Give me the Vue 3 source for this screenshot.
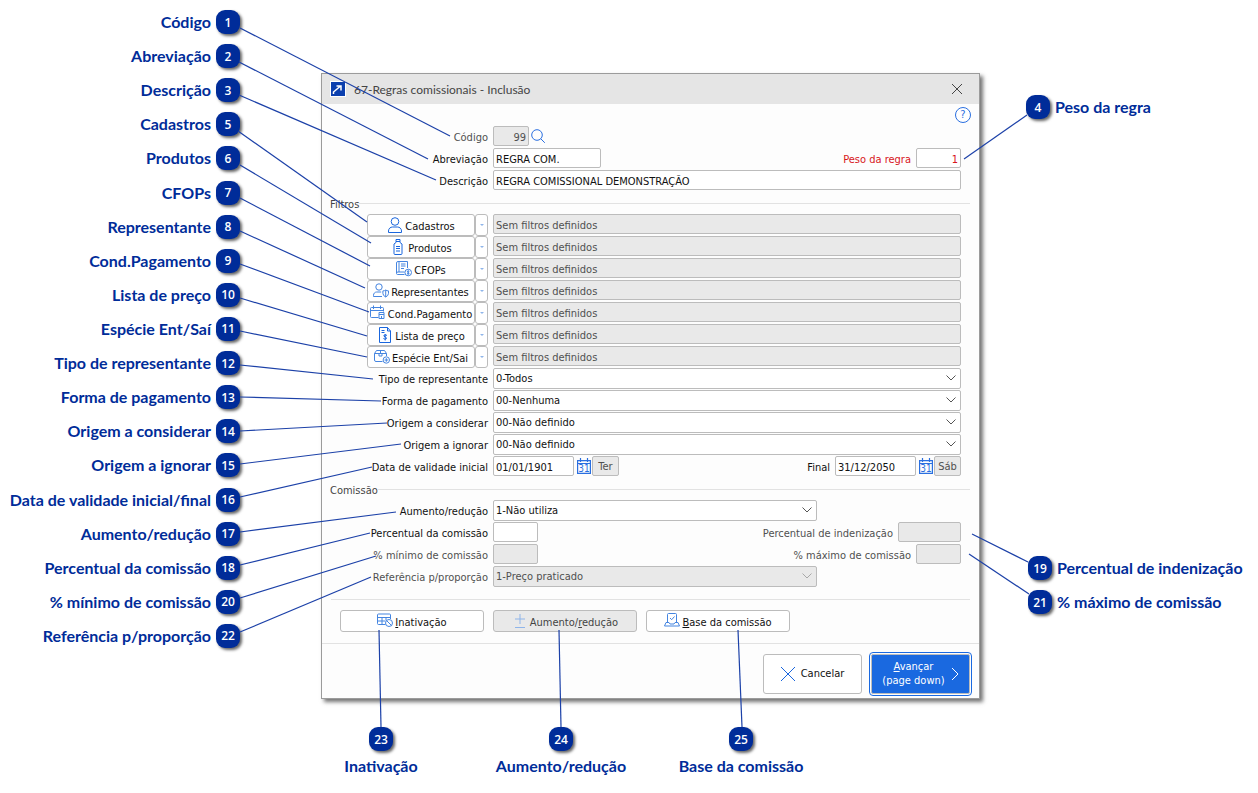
<script setup>
const leftCallouts = [
  { n: 1, text: 'Código', line: [240, 28, 450, 136] },
  { n: 2, text: 'Abreviação', line: [239, 62, 428, 159] },
  { n: 3, text: 'Descrição', line: [239, 95, 436, 180] },
  { n: 5, text: 'Cadastros', line: [238, 131, 367, 222] },
  { n: 6, text: 'Produtos', line: [240, 165, 371, 243] },
  { n: 7, text: 'CFOPs', line: [240, 198, 370, 266] },
  { n: 8, text: 'Representante', line: [240, 231, 365, 288] },
  { n: 9, text: 'Cond.Pagamento', line: [240, 264, 369, 312] },
  { n: 10, text: 'Lista de preço', line: [240, 298, 367, 336] },
  { n: 11, text: 'Espécie Ent/Saí', line: [240, 331, 367, 357] },
  { n: 12, text: 'Tipo de representante', line: [240, 365, 373, 379] },
  { n: 13, text: 'Forma de pagamento', line: [240, 397, 381, 401] },
  { n: 14, text: 'Origem a considerar', line: [240, 431, 387, 423] },
  { n: 15, text: 'Origem a ignorar', line: [240, 464, 401, 444] },
  { n: 16, text: 'Data de validade inicial/final', line: [240, 497, 372, 467] },
  { n: 17, text: 'Aumento/redução', line: [240, 532, 396, 512] },
  { n: 18, text: 'Percentual da comissão', line: [240, 565, 370, 533] },
  { n: 20, text: '% mínimo de comissão', line: [240, 598, 376, 556] },
  { n: 22, text: 'Referência p/proporção', line: [240, 632, 371, 577] },
]
const bottomCallouts = [
  { n: 23, text: 'Inativação', line: [381, 727, 379, 630] },
  { n: 24, text: 'Aumento/redução', line: [561, 727, 559, 630] },
  { n: 25, text: 'Base da comissão', line: [742, 727, 738, 630] },
]
const rightLines = [
  [47, 115, -16, 159],
  [48, 562, -8, 534],
  [49, 594, -11, 554],
]
const filters = [
  { id: 'cadastros', text: 'Cadastros', icon: 'user' },
  { id: 'produtos', text: 'Produtos', icon: 'bottle' },
  { id: 'cfops', text: 'CFOPs', icon: 'book' },
  { id: 'representantes', text: 'Representantes', icon: 'rep' },
  { id: 'condpag', text: 'Cond.Pagamento', icon: 'calendar' },
  { id: 'lista', text: 'Lista de preço', icon: 'doc' },
  { id: 'especie', text: 'Espécie Ent/Sai', icon: 'box' },
]
const selects = [
  { id: 'tipo', label: 'Tipo de representante', value: '0-Todos' },
  { id: 'forma', label: 'Forma de pagamento', value: '00-Nenhuma' },
  { id: 'considerar', label: 'Origem a considerar', value: '00-Não definido' },
  { id: 'ignorar', label: 'Origem a ignorar', value: '00-Não definido' },
]
</script>

<template>
  <main class="page">
    <ul class="callouts left">
      <li v-for="c in leftCallouts" :key="c.n" class="callout">
        <span>{{ c.text }}</span><b class="badge">{{ c.n }}</b>
      </li>
    </ul>

    <form class="dialog" @submit.prevent>
      <header class="titlebar">
        <svg class="logo" viewBox="0 0 16 16"><rect width="16" height="16" fill="#fff" stroke="none" /><rect x="1" y="1" width="14" height="14" fill="#0b3fae" stroke="none" /><path d="M3.500 13v-2L10 5.500M6.500 5H11v4.500" fill="none" stroke="#fff" stroke-width="1.500" /></svg>
        <h1>67-Regras comissionais - Inclusão</h1>
        <button type="button" class="close" aria-label="Fechar"><svg viewBox="0 0 12 12"><path d="M1 1l10 10M11 1L1 11" /></svg></button>
      </header>

      <div class="body">
        <button type="button" class="help" aria-label="Ajuda">?</button>

        <div class="row">
          <label class="lbl muted" for="codigo">Código</label>
          <input id="codigo" class="w36 num" value="99" disabled />
          <button type="button" class="glyph" aria-label="Pesquisar"><svg viewBox="0 0 14 14"><circle cx="6" cy="6" r="5.300" /><path d="M9.800 9.800l4 4" /></svg></button>
        </div>
        <div class="row">
          <label class="lbl" for="abrev">Abreviação</label>
          <input id="abrev" class="w108" value="REGRA COM." />
          <span class="push"></span>
          <label class="red" for="peso">Peso da regra</label>
          <input id="peso" class="w45 num red" value="1" />
        </div>
        <div class="row">
          <label class="lbl" for="descr">Descrição</label>
          <input id="descr" class="grow" value="REGRA COMISSIONAL DEMONSTRAÇÃO" />
        </div>

        <h2 class="legend"><span>Filtros</span></h2>

        <div v-for="f in filters" :key="f.id" class="row">
          <div class="split">
            <button type="button" class="filter">
              <svg v-if="f.icon === 'user'" viewBox="0 0 16 16"><circle cx="8" cy="4.500" r="3.800" /><path d="M1.500 15.500v-1.500c0-2.500 2-4 4-4h5c2 0 4 1.500 4 4v1.500z" /></svg>
              <svg v-else-if="f.icon === 'bottle'" viewBox="0 0 16 16"><path d="M6 .5h4v2H6zM6 2.500v1L4 5v9.500q0 1 1 1h6q1 0 1-1V5l-2-1.500v-1M6 7.500h4M6 9.500h4M6 12h4" /></svg>
              <svg v-else-if="f.icon === 'book'" class="soft" viewBox="0 0 16 16"><path d="M8.500 13.500h-7q-1 0-1-1.200V2q0-1.500 1.500-1.500h9.500V7M3 .5v10.500M.5 12q0-1 1.500-1h6.500M5 3h4.500M5 5h4.500M5 7.500h3" /><circle cx="12.200" cy="11.500" r="3.300" /><path d="M13.300 10.500q-1-.8-1.800-.2-.6.800.7 1.200 1.400.4.800 1.200-.8.700-2-.2M12.200 9.300v4.400" /></svg>
              <svg v-else-if="f.icon === 'rep'" class="soft" viewBox="0 0 16 16"><circle cx="6" cy="4" r="3.200" /><path d="M9 13.500H.5v-1.200c0-2 1.500-3.300 3.200-3.300h4.500M12.700 7q1.200.9 2.800.9v2.400q0 2.400-2.800 3.700-2.800-1.300-2.800-3.700V7.900q1.600 0 2.800-.9zM12.700 7v7" /></svg>
              <svg v-else-if="f.icon === 'calendar'" class="soft" viewBox="0 0 16 16"><path d="M8.500 12.500h-7q-1 0-1-1V3.500q0-1 1-1h11q1 0 1 1v3M.5 5.500h13M3.500.5v3.500M10.500.5v3.500" /><path d="M9 7.500h5v6H9zM9 9.500h5M11.500 11v2" /></svg>
              <svg v-else-if="f.icon === 'doc'" viewBox="0 0 16 16"><path d="M2.500.5h8l3 3.500v11.500h-11zM10.500.5V4h3M4.500 3.500h3M4.500 5.500h3M10 8.500q-1.500-1.200-2.800-.5-1 1.300 1 2 2 .7 1 1.900-1.300.8-2.800-.4M8.200 7v6.500" /></svg>
              <svg v-else class="soft" viewBox="0 0 16 16"><path d="M8.500 12.500H2q-1.500 0-1.500-1.500V4.500L2.500 1.500h8l2 3V7M.5 4.500h12M6.500 1.500v3M5 4.500v2.500h3V4.500" /><circle cx="12.300" cy="11" r="3.200" /><path d="M12.300 9.200v3.600M10.500 11h3.600" /></svg>
              <span>{{ f.text }}</span>
            </button>
            <button type="button" class="drop" :aria-label="'Opções de ' + f.text"><svg viewBox="0 0 6 4"><path d="M1 1h4L3 3z" /></svg></button>
          </div>
          <input :id="f.id" class="grow" :aria-label="f.text" value="Sem filtros definidos" disabled />
        </div>

        <div v-for="s in selects" :key="s.id" class="row">
          <label class="lbl" :for="s.id">{{ s.label }}</label>
          <div class="select grow">
            <select :id="s.id"><option>{{ s.value }}</option></select>
            <svg viewBox="0 0 10 6"><path d="M.5.5 5 5 9.500.5" /></svg>
          </div>
        </div>

        <div class="row">
          <label class="lbl" for="dini">Data de validade inicial</label>
          <input id="dini" class="w81" value="01/01/1901" />
          <button type="button" class="glyph cal" aria-label="Escolher data inicial"><svg viewBox="0 0 14 16"><path d="M.6 2.600h12.800v12.800H.6zM.6 5.500h12.800M3.500 0v4M10.500 0v4" /><text x="7" y="14">31</text></svg></button>
          <output class="day">Ter</output>
          <span class="push"></span>
          <label for="dfim">Final</label>
          <input id="dfim" class="w81" value="31/12/2050" />
          <button type="button" class="glyph cal" aria-label="Escolher data final"><svg viewBox="0 0 14 16"><path d="M.6 2.600h12.800v12.800H.6zM.6 5.500h12.800M3.500 0v4M10.500 0v4" /><text x="7" y="14">31</text></svg></button>
          <output class="day">Sáb</output>
        </div>

        <h2 class="legend"><span>Comissão</span></h2>

        <div class="row">
          <label class="lbl" for="aumento">Aumento/redução</label>
          <div class="select w324">
            <select id="aumento"><option>1-Não utiliza</option></select>
            <svg viewBox="0 0 10 6"><path d="M.5.5 5 5 9.500.5" /></svg>
          </div>
        </div>
        <div class="row">
          <label class="lbl" for="perc">Percentual da comissão</label>
          <input id="perc" class="w45" />
          <span class="push"></span>
          <label class="muted" for="inden">Percentual de indenização</label>
          <input id="inden" class="w63" disabled />
        </div>
        <div class="row">
          <label class="lbl muted" for="min">% mínimo de comissão</label>
          <input id="min" class="w45" disabled />
          <span class="push"></span>
          <label class="muted" for="max">% máximo de comissão</label>
          <input id="max" class="w45" disabled />
        </div>
        <div class="row">
          <label class="lbl muted" for="ref">Referência p/proporção</label>
          <div class="select w324">
            <select id="ref" disabled><option>1-Preço praticado</option></select>
            <svg viewBox="0 0 10 6"><path d="M.5.5 5 5 9.500.5" /></svg>
          </div>
        </div>

        <hr />

        <div class="actions">
          <button type="button"><svg class="soft" viewBox="0 0 16 16"><path d="M8.500 11.500h-7q-1 0-1-1V2q0-1 1-1h11q1 0 1 1v4M.5 4.500h13M.5 8h8M5 4.500v7M9 4.500V7" /><circle cx="12" cy="10" r="3.500" /><path d="M9.500 7.500l5 5" /></svg><span><u>I</u>nativação</span></button>
          <button type="button" disabled><svg class="faint" viewBox="0 0 16 16"><path d="M8 1v10M3 6h10M3 14.500h10" /></svg><span>Aumento/<u>r</u>edução</span></button>
          <button type="button"><svg class="soft" viewBox="0 0 16 16"><path d="M3.500 9.500v-8q0-1 1-1h7q1 0 1 1v8M2 9.500h3l1 1.500h4l1-1.500h3l1.500 3.500H.5zM6 5l1.700 1.700L10.500 3.500" /></svg><span><u>B</u>ase da comissão</span></button>
        </div>
      </div>

      <footer class="foot">
        <button type="button" class="cancel"><svg viewBox="0 0 14 14"><path d="M0 0l14 14M14 0L0 14" /></svg>Cancelar</button>
        <button type="submit" class="next"><span><u>A</u>vançar<br />(page down)</span><svg viewBox="0 0 8 14"><path d="M1 1l6 6-6 6" /></svg></button>
      </footer>
    </form>

    <div class="right">
      <div class="callout"><b class="badge">4</b><span>Peso da regra</span></div>
      <ul class="callouts pair">
        <li class="callout"><b class="badge">19</b><span>Percentual de indenização</span></li>
        <li class="callout"><b class="badge">21</b><span>% máximo de comissão</span></li>
      </ul>
      <svg class="wires"><line v-for="(l, i) in rightLines" :key="i" :x1="l[0]" :y1="l[1]" :x2="l[2]" :y2="l[3]" /></svg>
    </div>

    <ul class="callouts bottom">
      <li v-for="c in bottomCallouts" :key="c.n" class="callout"><b class="badge">{{ c.n }}</b><span>{{ c.text }}</span></li>
    </ul>

    <svg class="wires"><line v-for="c in [...leftCallouts, ...bottomCallouts]" :key="c.n" :x1="c.line[0]" :y1="c.line[1]" :x2="c.line[2]" :y2="c.line[3]" /></svg>
  </main>
</template>

<style>
body { background: #fff; }
</style>

<style scoped>
* { box-sizing: border-box; }
.page {
  position: relative;
  display: grid;
  grid-template-columns: 321px minmax(600px, 1fr) 278px;
  align-items: start;
  font: 11px/14px "DejaVu Sans Condensed", "DejaVu Sans", sans-serif;
  color: #111;
}
ul { list-style: none; margin: 0; padding: 0; }
.wires { position: absolute; left: 0; top: 0; width: 1px; height: 1px; overflow: visible; pointer-events: none; }
.wires line { stroke: #1c41a8; stroke-width: 1.2; }

.callouts { display: flex; }
.callout { display: flex; align-items: center; gap: 5px; height: 24px; color: #002c99; font: 700 16px/20px Lato, sans-serif; white-space: nowrap; }
.badge {
  display: grid; place-items: center; width: 24px; height: 24px; padding-top: 1px; border-radius: 9px;
  background: #002c99; color: #fff; font: 600 12px/16px "Open Sans", sans-serif;
  box-shadow: 2px 2px 3px rgba(0, 0, 0, .6);
}
.left { flex-direction: column; justify-content: space-between; align-items: flex-end; height: 638px; margin: 10px 81px 0 0; }
.right { position: relative; padding: 95px 0 0 46px; }
.pair { flex-direction: column; gap: 10px; margin: 437px 0 0 2px; }
.bottom { grid-column: 1 / -1; padding: 28px 0 0 291px; }
.bottom .callout { flex-direction: column; width: 180px; height: auto; }

.dialog { margin-top: 73px; border: 1px solid #9b9b9b; background: #fdfdfd; box-shadow: 3px 3px 4px rgba(0, 0, 0, .55); }
.titlebar { display: flex; align-items: center; height: 30px; padding: 0 16px 0 8px; background: #e5e5e5; }
.logo { width: 16px; height: 16px; }
h1 { flex: 1; margin: 2px 0 0 8px; font: 400 12px/16px Lato, sans-serif; color: #444; }
button { font: inherit; color: inherit; padding: 0; margin: 0; }
svg { fill: none; stroke: #1a66dd; stroke-width: 1; flex: none; }
svg.soft { stroke: #4585e0; }
svg.faint { stroke: #8fb5ea; }
.close, .glyph { display: grid; place-items: center; border: 0; background: none; }
.close svg { width: 12px; height: 12px; stroke: #444; }

.body { position: relative; padding: 22px 18px 11px 0; }
.help { position: absolute; top: 3px; right: 8px; width: 16px; height: 16px; border: 1px solid #2a6fe0; border-radius: 50%; background: #fff; color: #2a6fe0; line-height: 14px; }
.row { display: flex; height: 22px; gap: 5px; align-items: flex-start; }
label { line-height: 24px; white-space: nowrap; }
.lbl { width: 166px; text-align: right; }
.push { flex: 1; }
.grow { flex: 1; min-width: 0; }
.muted { color: #505050; }
.red, input.red { color: #d8161c; }
input, .day { height: 20px; padding: 2px 2px 0; border: 1px solid #bcbcbc; border-radius: 2px; background: #fff; font: inherit; color: #111; }
input:disabled, .day { background: #e9e9e9; color: #505050; }
.num { text-align: right; }
.w36 { width: 36px; }
.w45 { width: 45px; }
.w63 { width: 63px; }
.w81 { width: 81px; }
.w108 { width: 108px; }
.w324 { width: 324px; }
.glyph { height: 20px; margin-left: -3px; }
.glyph svg { width: 14px; height: 14px; stroke: #2a6fe0; }
.glyph.cal { margin: 0 -4px 0 -2px; }
.glyph.cal svg { height: 16px; stroke-width: 1.2; }
.cal text { fill: #2a6fe0; stroke: none; font: 10px "DejaVu Sans Condensed", sans-serif; text-anchor: middle; }
.day { width: 27px; padding: 0; text-align: center; line-height: 20px; }

.legend { display: flex; align-items: center; height: 22px; margin: 0 -9px 0 8px; font: inherit; color: #444; }
.legend span { padding-top: 3px; }
.legend::after { content: ""; flex: 1; height: 1px; background: #e2e2e2; }

.split { display: flex; width: 166px; padding-left: 45px; }
.split button { height: 22px; border: 1px solid #bcbcbc; border-radius: 3px; background: #fff; }
.filter { flex: 1; display: flex; align-items: center; justify-content: center; gap: 2px; white-space: nowrap; }
.filter svg, .actions svg { width: 16px; height: 16px; }
.filter span, .actions span { padding-top: 3px; }
.split .drop { width: 13px; display: grid; place-items: center; }
.drop svg { width: 6px; height: 4px; fill: #8fb5ea; stroke: none; }

.select { position: relative; height: 21px; }
select { width: 100%; height: 21px; padding: 1px 2px 0; border: 1px solid #bcbcbc; border-radius: 2px; background: #fff; appearance: none; font: inherit; color: #111; }
select:disabled { background: #e9e9e9; color: #505050; opacity: 1; }
.select svg { position: absolute; right: 5px; top: 7px; width: 10px; height: 6px; stroke: #555; pointer-events: none; }
select:disabled + svg { stroke: #a8a8a8; }

hr { height: 1px; margin: 11px -9px 10px 9px; border: 0; background: #e2e2e2; }
.actions { display: flex; gap: 9px; padding-left: 18px; }
.actions button { display: flex; align-items: center; justify-content: center; gap: 2px; width: 144px; height: 22px; border: 1px solid #bcbcbc; border-radius: 3px; background: #fff; white-space: nowrap; }
.actions button:disabled { background: #e9e9e9; color: #444; }

.foot { display: flex; justify-content: flex-end; gap: 9px; padding: 10px 9px 4px; border-top: 1px solid #e2e2e2; }
.foot button { display: flex; align-items: center; justify-content: center; width: 99px; height: 40px; border: 1px solid #bcbcbc; border-radius: 3px; background: #fff; }
.cancel { gap: 6px; }
.cancel svg { width: 14px; height: 14px; overflow: visible; }
.foot .next { gap: 6px; border-radius: 2px; background: #1a69e0; color: #fff; outline: 1px solid #1a69e0; outline-offset: 1px; }
.next svg { width: 8px; height: 14px; stroke: #fff; }
</style>
